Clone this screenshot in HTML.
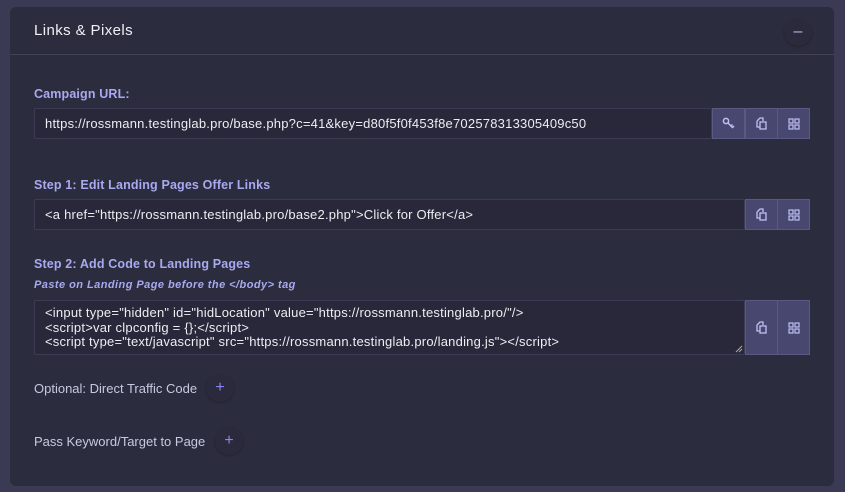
<!DOCTYPE html>
<html><head><style>
*{box-sizing:border-box;margin:0;padding:0}
body{width:845px;height:492px;background:#3b3a55;font-family:"Liberation Sans",sans-serif;position:relative;overflow:hidden}
.card{position:absolute;left:10px;top:7px;width:824px;height:479px;background:#2c2c3f;border-radius:6px}
.hdr{position:absolute;left:0;top:0;width:824px;height:48px;border-bottom:1px solid #434259}
.title{position:absolute;left:24px;top:15px;color:#f0f0f5;font-size:15px;letter-spacing:0.4px}
.circ{position:absolute;width:28px;height:28px;border-radius:50%;background:#2a2a3c;box-shadow:0 1px 2px rgba(0,0,0,.25);color:#b8b8f0;text-align:center;line-height:27px;font-size:16px}
.lbl{position:absolute;left:34px;color:#a9a9f0;font-weight:bold;font-size:12.5px;letter-spacing:0.15px}
.it{position:absolute;left:34px;color:#a9a9f0;font-style:italic;font-weight:bold;font-size:11px;letter-spacing:0.45px}
.inp{position:absolute;left:34px;background:#28283a;border:1px solid #3d3c54;border-radius:2px;color:#ededf2;font-size:13px;letter-spacing:0.22px;padding-left:10px;white-space:nowrap}
.btn{position:absolute;width:33px;background:#48476f;border:1px solid #5a5984;display:flex;align-items:center;justify-content:center}
.opt{position:absolute;left:34px;color:#c8c8e0;font-size:13px;letter-spacing:0px}
</style></head><body>
<div class="card">
<div class="hdr"><div class="title">Links &amp; Pixels</div>
<div class="circ" style="left:774px;top:11px;">&#8211;</div></div>
</div>
<div class="lbl" style="top:87px">Campaign URL:</div>
<div class="inp" style="top:108px;width:678px;height:31px;line-height:29px">https://rossmann.testinglab.pro/base.php?c=41&amp;key=d80f5f0f453f8e702578313305409c50</div>
<div class="btn" style="left:712px;top:108px;height:31px"><svg width="14" height="14" viewBox="0 0 14 14"><circle cx="4" cy="4" r="2.6" fill="none" stroke="#c0c0f5" stroke-width="1.5"/><path d="M6 6 L11 11 M9 9 L10.5 7.5 M10.5 10.5 L12 9" stroke="#c0c0f5" stroke-width="1.5" fill="none"/></svg></div>
<div class="btn" style="left:745px;top:108px;height:31px"><svg width="14" height="14" viewBox="0 0 14 14"><path d="M2 4 L5 1 H8 V4 M2 4 V10 H5" fill="none" stroke="#c0c0f5" stroke-width="1.3"/><rect x="5" y="5" width="6" height="7" fill="none" stroke="#c0c0f5" stroke-width="1.3"/></svg></div>
<div class="btn" style="left:777px;top:108px;height:31px"><svg width="12" height="12" viewBox="0 0 12 12"><g fill="none" stroke="#c0c0f5" stroke-width="1.2"><rect x="1" y="1" width="4" height="4"/><rect x="7" y="1" width="4" height="4"/><rect x="1" y="7" width="4" height="4"/><rect x="7" y="7" width="4" height="4"/></g></svg></div>

<div class="lbl" style="top:178px">Step 1: Edit Landing Pages Offer Links</div>
<div class="inp" style="top:199px;width:711px;height:31px;line-height:29px">&lt;a href="https://rossmann.testinglab.pro/base2.php"&gt;Click for Offer&lt;/a&gt;</div>
<div class="btn" style="left:745px;top:199px;height:31px"><svg width="14" height="14" viewBox="0 0 14 14"><path d="M2 4 L5 1 H8 V4 M2 4 V10 H5" fill="none" stroke="#c0c0f5" stroke-width="1.3"/><rect x="5" y="5" width="6" height="7" fill="none" stroke="#c0c0f5" stroke-width="1.3"/></svg></div>
<div class="btn" style="left:777px;top:199px;height:31px"><svg width="12" height="12" viewBox="0 0 12 12"><g fill="none" stroke="#c0c0f5" stroke-width="1.2"><rect x="1" y="1" width="4" height="4"/><rect x="7" y="1" width="4" height="4"/><rect x="1" y="7" width="4" height="4"/><rect x="7" y="7" width="4" height="4"/></g></svg></div>

<div class="lbl" style="top:257px">Step 2: Add Code to Landing Pages</div>
<div class="it" style="top:279px">Paste on Landing Page before the &lt;/body&gt; tag</div>
<div class="inp" style="top:300px;width:711px;height:55px;line-height:14.5px;padding-top:5px">&lt;input type="hidden" id="hidLocation" value="https://rossmann.testinglab.pro/"/&gt;<br>&lt;script&gt;var clpconfig = {};&lt;/script&gt;<br>&lt;script type="text/javascript" src="https://rossmann.testinglab.pro/landing.js"&gt;&lt;/script&gt;
<svg style="position:absolute;right:1px;bottom:1px" width="8" height="8"><path d="M1 7 L7 1 M4 7 L7 4" stroke="#aaa" stroke-width="1"/></svg></div>
<div class="btn" style="left:745px;top:300px;height:55px"><svg width="14" height="14" viewBox="0 0 14 14"><path d="M2 4 L5 1 H8 V4 M2 4 V10 H5" fill="none" stroke="#c0c0f5" stroke-width="1.3"/><rect x="5" y="5" width="6" height="7" fill="none" stroke="#c0c0f5" stroke-width="1.3"/></svg></div>
<div class="btn" style="left:777px;top:300px;height:55px"><svg width="12" height="12" viewBox="0 0 12 12"><g fill="none" stroke="#c0c0f5" stroke-width="1.2"><rect x="1" y="1" width="4" height="4"/><rect x="7" y="1" width="4" height="4"/><rect x="1" y="7" width="4" height="4"/><rect x="7" y="7" width="4" height="4"/></g></svg></div>

<div class="opt" style="top:381px">Optional: Direct Traffic Code</div>
<div class="circ" style="left:206px;top:374px;color:#8a84f0">+</div>
<div class="opt" style="top:434px">Pass Keyword/Target to Page</div>
<div class="circ" style="left:215px;top:427px;color:#8a84f0">+</div>
</body></html>
